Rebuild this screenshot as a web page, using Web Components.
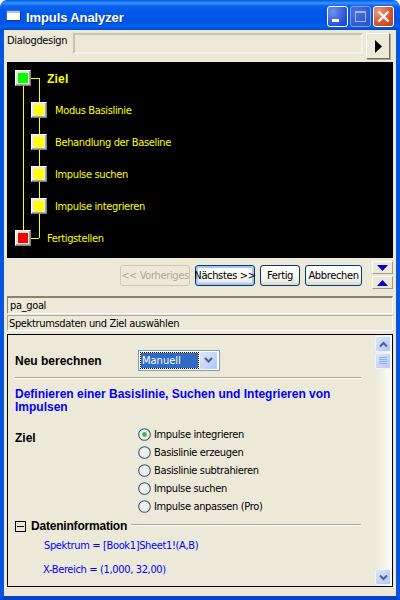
<!DOCTYPE html>
<html>
<head>
<meta charset="utf-8">
<title>Impuls Analyzer</title>
<style>
  html, body { margin: 0; padding: 0; background: #fff; }
  body { width: 400px; height: 600px; overflow: hidden; font: 11px "DejaVu Sans Condensed", "DejaVu Sans", sans-serif; letter-spacing: -0.35px; }
</style>
</head>
<body>
<impuls-window>
  <xp-titlebar slot="title">Impuls Analyzer</xp-titlebar>

  <design-row></design-row>

  <step-tree>
    <tree-node color="#00ff00" indent="0" strong>Ziel</tree-node>
    <tree-node color="#ffff00" indent="1">Modus Basislinie</tree-node>
    <tree-node color="#ffff00" indent="1">Behandlung der Baseline</tree-node>
    <tree-node color="#ffff00" indent="1">Impulse suchen</tree-node>
    <tree-node color="#ffff00" indent="1">Impulse integrieren</tree-node>
    <tree-node color="#ff0000" indent="0">Fertigstellen</tree-node>
  </step-tree>

  <wizard-buttons></wizard-buttons>

  <status-line first>pa_goal</status-line>
  <status-line>Spektrumsdaten und Ziel auswählen</status-line>

  <goal-panel></goal-panel>
</impuls-window>

<script>
class ImpulsWindow extends HTMLElement {
  connectedCallback() {
    this.attachShadow({ mode: 'open' });
    this.shadowRoot.innerHTML = `
      <style>
        :host {
          display: flex;
          flex-direction: column;
          width: 400px;
          height: 600px;
          box-sizing: border-box;
          background: #ece9d8;
          border-radius: 7px 7px 0 0;
          overflow: hidden;
          color: #000;
        }
        .body {
          flex: 1;
          display: flex;
          flex-direction: column;
          min-height: 0;
          border-left: 4px solid #0855dd;
          border-right: 4px solid #0855dd;
          border-bottom: 4px solid #0841d0;
          padding: 3px 3px 9px;
        }
      </style>
      <slot name="title"></slot>
      <div class="body"><slot></slot></div>
    `;
  }
}
customElements.define('impuls-window', ImpulsWindow);

class XpTitlebar extends HTMLElement {
  connectedCallback() {
    this.attachShadow({ mode: 'open' });
    this.shadowRoot.innerHTML = `
      <style>
        :host {
          display: flex;
          align-items: center;
          flex: none;
          height: 30px;
          box-sizing: border-box;
          padding: 0 6px 0 6px;
          background: linear-gradient(to bottom, #0a58d8 0, #0a6cf0 1px, #3a93ff 3px, #0b62ea 6px, #0058ec 12px, #0055e5 22px, #0060f0 27px, #0047c8 30px);
        }
        .icon {
          width: 13px;
          height: 9px;
          margin: 1px 5px 0 0;
          background: linear-gradient(#a9c4ee 0 2px, #fff 2px);
          border: 1px solid #3c6ccc;
          border-right-color: #123a9c;
          border-bottom-color: #123a9c;
          box-sizing: content-box;
        }
        .text {
          flex: 1;
          color: #fff;
          font: bold 13px "Liberation Sans", sans-serif;
          letter-spacing: -0.1px;
          text-shadow: 1px 1px 0 #0a3aa8;
          margin-top: 4px;
        }
        .btn {
          width: 21px;
          height: 21px;
          box-sizing: border-box;
          border: 1px solid #fff;
          border-radius: 3px;
          margin-left: 2px;
          margin-top: 2px;
          display: block;
        }
        .min { background: radial-gradient(circle at 25% 25%, #6f92ee, #2a55d8 65%, #1c45c8); }
        .max { background: radial-gradient(circle at 25% 25%, #4a72dc, #2f5cd0 65%, #2a52c4); border-color: #7f9fe8; }
        .close { background: radial-gradient(circle at 25% 25%, #ee9a7c, #d9522c 60%, #c03a14); }
      </style>
      <div class="icon"></div>
      <div class="text"><slot></slot></div>
      <svg class="btn min" viewBox="0 0 19 19"><rect x="4" y="12" width="7" height="3" fill="#fff"/></svg>
      <svg class="btn max" viewBox="0 0 19 19"><rect x="4.5" y="4.5" width="10" height="10" fill="none" stroke="#9db4ee"/><rect x="4" y="4" width="11" height="2" fill="#9db4ee"/></svg>
      <svg class="btn close" viewBox="0 0 19 19"><path d="M4.5 4.5 14.5 14.5M14.5 4.5 4.5 14.5" stroke="#fff" stroke-width="2.4" fill="none"/></svg>
    `;
  }
}
customElements.define('xp-titlebar', XpTitlebar);

class DesignRow extends HTMLElement {
  connectedCallback() {
    this.attachShadow({ mode: 'open' });
    this.shadowRoot.innerHTML = `
      <style>
        :host {
          display: flex;
          flex: none;
          height: 29px;
        }
        .label { width: 66px; padding-top: 1px; box-sizing: border-box; }
        .field {
          width: 290px;
          height: 21px;
          box-sizing: border-box;
          border: 2px solid;
          border-color: #c7c4b4 #f4f2e8 #f4f2e8 #c7c4b4;
          outline: 0;
          background: #ece9d8;
        }
        .go {
          width: 24px;
          height: 26px;
          margin-left: 3px;
          box-sizing: border-box;
          border: 1px solid;
          border-color: #fff #716f64 #716f64 #fff;
          box-shadow: 1px 1px 0 #aca899;
          display: flex;
          align-items: center;
          justify-content: center;
        }
      </style>
      <div class="label">Dialogdesign</div>
      <div class="field"></div>
      <div class="go"><svg width="7" height="13" viewBox="0 0 7 13"><path d="M0 0 7 6.5 0 13Z" fill="#000"/></svg></div>
    `;
  }
}
customElements.define('design-row', DesignRow);

class StepTree extends HTMLElement {
  connectedCallback() {
    this.attachShadow({ mode: 'open' });
    this.shadowRoot.innerHTML = `
      <style>
        :host {
          display: flex;
          flex-direction: column;
          flex: none;
          position: relative;
          width: 386px;
          height: 196px;
          box-sizing: border-box;
          padding-top: 8px;
          background: #000;
        }
        /* connector lines behind the nodes */
        .line { position: absolute; background: #ffff00; }
      </style>
      <div class="line" style="left:16px;top:24px;width:1px;height:144px"></div>
      <div class="line" style="left:32px;top:16px;width:1px;height:160px"></div>
      <div class="line" style="left:24px;top:16px;width:8px;height:1px"></div>
      <div class="line" style="left:24px;top:176px;width:8px;height:1px"></div>
      <slot></slot>
    `;
  }
}
customElements.define('step-tree', StepTree);

class TreeNode extends HTMLElement {
  connectedCallback() {
    const indent = this.getAttribute('indent') === '1';
    const strong = this.hasAttribute('strong');
    const color = this.getAttribute('color');
    this.attachShadow({ mode: 'open' });
    this.shadowRoot.innerHTML = `
      <style>
        :host {
          display: flex;
          align-items: center;
          flex: none;
          height: 16px;
          margin-bottom: 16px;
          position: relative;
          padding-left: ${indent ? 24 : 8}px;
          color: #ffff00;
          font: ${strong ? 'bold 12px "Liberation Sans"' : '11px "DejaVu Sans Condensed"'}, sans-serif;
          letter-spacing: ${strong ? 0.2 : -0.35}px;
        }
        .box {
          width: 16px;
          height: 16px;
          box-sizing: border-box;
          border: 1px solid;
          border-color: #fff #808080 #808080 #fff;
          background: #ece9d8;
          box-shadow: inset -1px -1px 0 #aca899;
          padding: 2px;
          margin-right: ${indent ? 8 : 16}px;
        }
        .box i { display: block; width: 100%; height: 100%; background: ${color}; }
        .t { padding-top: 1px; }
      </style>
      <div class="box"><i></i></div>
      <div class="t"><slot></slot></div>
    `;
  }
}
customElements.define('tree-node', TreeNode);

class XpButton extends HTMLElement {
  connectedCallback() {
    const disabled = this.hasAttribute('disabled');
    const focus = this.hasAttribute('focus');
    this.attachShadow({ mode: 'open' });
    this.shadowRoot.innerHTML = `
      <style>
        :host {
          display: flex;
          align-items: center;
          justify-content: center;
          box-sizing: border-box;
          height: 21px;
          white-space: nowrap;
          border: 1px solid ${disabled ? '#c9c7ba' : '#003c74'};
          border-radius: 3px;
          color: ${disabled ? '#aca899' : '#000'};
          background: ${disabled ? '#ece9d8' : 'linear-gradient(#ffffff, #f4f4ee 70%, #dcd8cc)'};
          ${focus ? 'box-shadow: inset 0 0 0 2px #a9c6f2;' : ''}
        }
      </style>
      <slot></slot>
    `;
  }
}
customElements.define('xp-button', XpButton);

class WizardButtons extends HTMLElement {
  connectedCallback() {
    this.attachShadow({ mode: 'open' });
    this.shadowRoot.innerHTML = `
      <style>
        :host {
          display: flex;
          flex: none;
          height: 35px;
          box-sizing: border-box;
          padding: 7px 0 0 113px;
        }
        .spin {
          display: flex;
          flex-direction: column;
          gap: 2px;
          margin: -4px 0 0 10px;
        }
        .spin div {
          width: 21px;
          height: 13px;
          box-sizing: border-box;
          border: 1px solid;
          border-color: #fff #9d9b8e #9d9b8e #fff;
          display: flex;
          align-items: center;
          justify-content: center;
        }
      </style>
      <xp-button disabled style="width:70px">&lt;&lt; Vorheriges</xp-button>
      <xp-button focus style="width:60px;margin-left:5px">Nächstes &gt;&gt;</xp-button>
      <xp-button style="width:40px;margin-left:5px">Fertig</xp-button>
      <xp-button style="width:57px;margin-left:5px">Abbrechen</xp-button>
      <div class="spin">
        <div><svg width="11" height="6" viewBox="0 0 11 6"><path d="M0 0H11L5.5 6Z" fill="#0000e0"/></svg></div>
        <div><svg width="11" height="6" viewBox="0 0 11 6"><path d="M0 6H11L5.5 0Z" fill="#0000e0"/></svg></div>
      </div>
    `;
  }
}
customElements.define('wizard-buttons', WizardButtons);

class StatusLine extends HTMLElement {
  connectedCallback() {
    const first = this.hasAttribute('first');
    this.attachShadow({ mode: 'open' });
    this.shadowRoot.innerHTML = `
      <style>
        :host {
          display: flex;
          align-items: center;
          flex: none;
          box-sizing: border-box;
          height: ${first ? 18 : 16}px;
          margin-top: ${first ? 3 : 1}px;
          padding-left: ${first ? 2 : 1}px;
          border-top: ${first ? 2 : 1}px solid ${first ? '#86836f' : '#aca899'};
          border-left: 1px solid ${first ? '#86836f' : '#aca899'};
          border-right: 1px solid #fff;
          border-bottom: 1px solid #fff;
        }
      </style>
      <slot></slot>
    `;
  }
}
customElements.define('status-line', StatusLine);

class XpRadio extends HTMLElement {
  connectedCallback() {
    const on = this.hasAttribute('checked');
    this.attachShadow({ mode: 'open' });
    this.shadowRoot.innerHTML = `
      <style>
        :host {
          display: flex;
          align-items: center;
          height: 18px;
        }
        svg { margin-right: 3px; flex: none; }
      </style>
      <svg width="13" height="13" viewBox="0 0 13 13">
        <circle cx="6.5" cy="6.5" r="5.8" fill="#f2f0e6" stroke="#2f5f86" stroke-width="1.1"/>
        ${on ? '<circle cx="6.5" cy="6.5" r="2.4" fill="#4db04d"/>' : ''}
      </svg>
      <slot></slot>
    `;
  }
}
customElements.define('xp-radio', XpRadio);

class XpSelect extends HTMLElement {
  connectedCallback() {
    this.attachShadow({ mode: 'open' });
    this.shadowRoot.innerHTML = `
      <style>
        :host {
          display: flex;
          align-items: center;
          width: 82px;
          height: 21px;
          box-sizing: border-box;
          border: 1px solid #7f9db9;
          background: #fff;
          padding: 2px;
          gap: 2px;
          letter-spacing: 0;
        }
        .val {
          flex: 1;
          height: 15px;
          line-height: 15px;
          box-sizing: border-box;
          background: #316ac5;
          color: #fff;
          outline: 1px dotted #000;
          padding-left: 1px;
        }
        .arrow {
          width: 17px;
          height: 17px;
          background: linear-gradient(135deg, #dce6fb, #b3c8f5);
          border-radius: 1px;
          display: flex;
          align-items: center;
          justify-content: center;
        }
      </style>
      <div class="val"><slot></slot></div>
      <div class="arrow"><svg width="9" height="7" viewBox="0 0 9 7"><path d="M1 1 4.5 4.5 8 1" fill="none" stroke="#4d6185" stroke-width="2"/></svg></div>
    `;
  }
}
customElements.define('xp-select', XpSelect);

class XpScrollbar extends HTMLElement {
  connectedCallback() {
    this.attachShadow({ mode: 'open' });
    this.shadowRoot.innerHTML = `
      <style>
        :host {
          display: flex;
          flex-direction: column;
          flex: none;
          width: 17px;
          box-sizing: border-box;
          background: linear-gradient(to right, #ece9d8, #fdfdfb);
        }
        .b {
          width: 16px;
          height: 16px;
          margin: 1px 0 0 0;
          box-sizing: border-box;
          border: 1px solid #eef3fd;
          border-radius: 2px;
          background: linear-gradient(135deg, #dce6fb, #b3c8f5);
          display: flex;
          align-items: center;
          justify-content: center;
        }
        .thumb { height: 16px; }
        .fill { flex: 1; }
      </style>
      <div class="b"><svg width="9" height="7" viewBox="0 0 9 7"><path d="M1 5.5 4.5 2 8 5.5" fill="none" stroke="#4d6185" stroke-width="2"/></svg></div>
      <div class="b thumb"><svg width="8" height="8" viewBox="0 0 8 8"><path d="M0 .5H8M0 2.5H8M0 4.5H8M0 6.5H8" stroke="#8fb0f0"/></svg></div>
      <div class="fill"></div>
      <div class="b" style="margin:0 0 1px"><svg width="9" height="7" viewBox="0 0 9 7"><path d="M1 1.5 4.5 5 8 1.5" fill="none" stroke="#4d6185" stroke-width="2"/></svg></div>
    `;
  }
}
customElements.define('xp-scrollbar', XpScrollbar);

class GoalPanel extends HTMLElement {
  connectedCallback() {
    this.attachShadow({ mode: 'open' });
    this.shadowRoot.innerHTML = `
      <style>
        :host {
          display: flex;
          flex: 1;
          min-height: 0;
          margin-top: 3px;
          box-sizing: border-box;
          border: 1px solid #000;
        }
        .content {
          flex: 1;
          min-width: 0;
          box-sizing: border-box;
          padding: 15px 14px 0 7px;
        }
        .row { display: flex; }
        b { font: bold 12px "Liberation Sans", sans-serif; letter-spacing: 0; }
        .calc { align-items: center; height: 21px; }
        .calc b { width: 123px; padding-top: 1px; }
        .sep {
          height: 1px;
          margin-top: 6px;
          background: #aca899;
          box-shadow: 0 1px 0 #fff;
        }
        .head {
          margin-top: 10px;
          height: 26px;
          color: #0000ff;
          font: bold 12px/13px "Liberation Sans", sans-serif;
          letter-spacing: 0;
        }
        .goal { margin-top: 11px; }
        .goal b { width: 123px; padding-top: 6px; box-sizing: border-box; }
        .radios { display: flex; flex-direction: column; }
        .info { align-items: center; height: 14px; margin-top: 4px; }
        .info b { letter-spacing: -0.2px; }
        .minus {
          width: 11px;
          height: 11px;
          box-sizing: border-box;
          border: 1px solid #000;
          margin-right: 5px;
          display: flex;
          align-items: center;
          justify-content: center;
        }
        .minus i { display: block; width: 7px; height: 1px; background: #000; }
        .info .rule { flex: 1; height: 1px; background: #aca899; box-shadow: 0 1px 0 #fff; margin: -3px 0 0 4px; }
        .data { color: #0000ff; height: 14px; line-height: 14px; }
      </style>
      <div class="content">
        <div class="row calc"><b>Neu berechnen</b><xp-select>Manuell</xp-select></div>
        <div class="sep"></div>
        <div class="head">Definieren einer Basislinie, Suchen und Integrieren von Impulsen</div>
        <div class="row goal">
          <b>Ziel</b>
          <div class="radios">
            <xp-radio checked>Impulse integrieren</xp-radio>
            <xp-radio>Basislinie erzeugen</xp-radio>
            <xp-radio>Basislinie subtrahieren</xp-radio>
            <xp-radio>Impulse suchen</xp-radio>
            <xp-radio>Impulse anpassen (Pro)</xp-radio>
          </div>
        </div>
        <div class="row info"><div class="minus"><i></i></div><b>Dateninformation</b><div class="rule"></div></div>
        <div class="data" style="margin:6px 0 0 29px">Spektrum = [Book1]Sheet1!(A,B)</div>
        <div class="data" style="margin:10px 0 0 28px">X-Bereich = (1,000, 32,00)</div>
      </div>
      <xp-scrollbar></xp-scrollbar>
    `;
  }
}
customElements.define('goal-panel', GoalPanel);
</script>
</body>
</html>
